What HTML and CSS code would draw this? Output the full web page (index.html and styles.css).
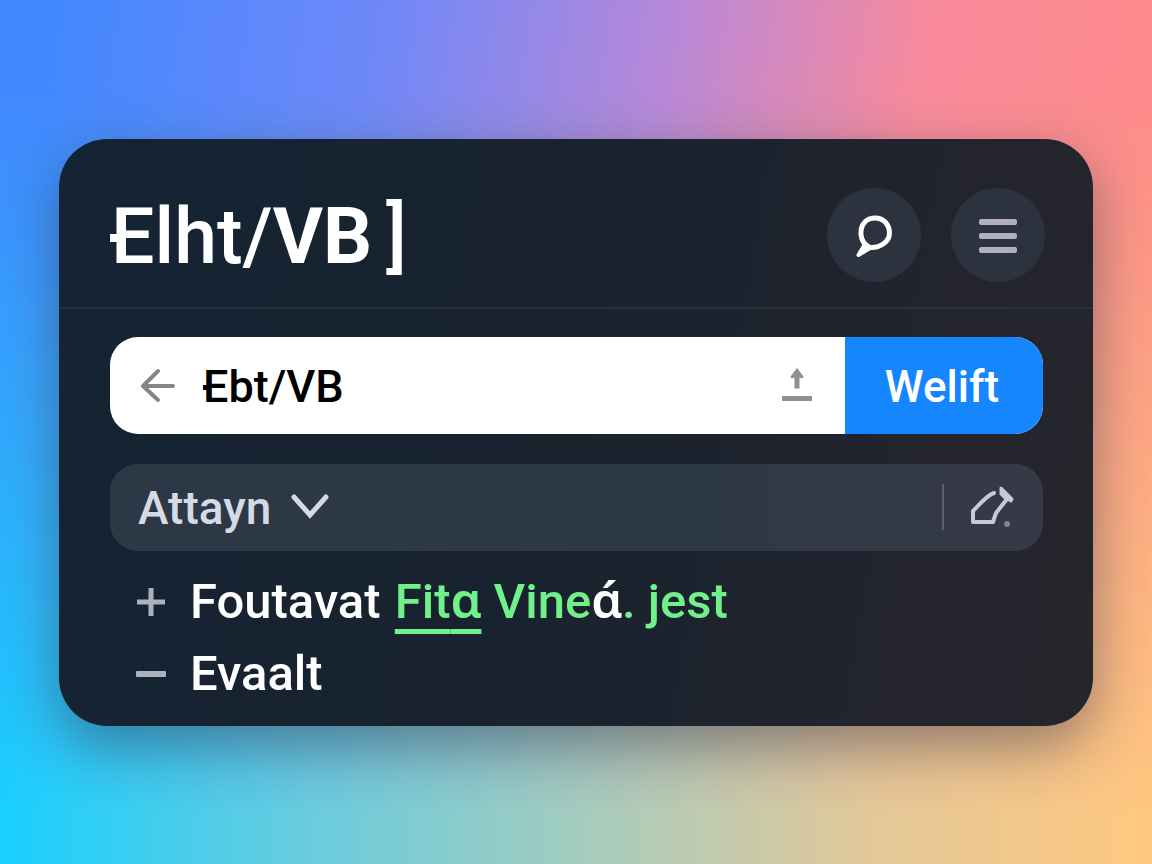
FILE: index.html
```
<!DOCTYPE html>
<html lang="en">
<head>
    <meta charset="UTF-8">
    <meta name="viewport" content="width=device-width, initial-scale=1.0">
    <title>Elht/VB</title>
    <link rel="stylesheet" href="styles.css">
</head>
<body>

<main class="card">
    <header class="card-header">
        <h1 class="title"><span class="barred">E</span>lht/<b>VB</b><span class="bracket">]</span></h1>
        <div class="actions">
            <button type="button" class="round-btn" aria-label="Search">
                <svg width="94" height="94" viewBox="0 0 94 94" fill="none">
                    <path d="M38 56 L31.5 67 L43 60" fill="#fff" stroke="#fff" stroke-width="4" stroke-linejoin="round"/>
                    <path d="M40 57.500 C30 51 32 30 48 30 C57 30 62.500 37 62.500 45 C62.500 54 53 60 43 59.5 Z" fill="#2c333f" stroke="#fff" stroke-width="5" stroke-linejoin="round"/>
                </svg>
            </button>
            <button type="button" class="round-btn" aria-label="Menu">
                <svg width="94" height="94" viewBox="0 0 94 94" fill="#b0afbb">
                    <rect x="28" y="31" width="38" height="6" rx="2"/>
                    <rect x="28" y="45" width="38" height="6" rx="2"/>
                    <rect x="28" y="59" width="38" height="6" rx="2"/>
                </svg>
            </button>
        </div>
    </header>

    <div class="container">
        <form class="search">
            <button type="button" class="icon-btn" aria-label="Back">
                <svg width="36" height="36" viewBox="0 0 36 36" fill="none" stroke="#858585" stroke-width="4" stroke-linecap="round" stroke-linejoin="round">
                    <path d="M19 4 L4 19 L19 33 M5 19 H34"/>
                </svg>
            </button>
            <div class="search-field">
                <input type="text" class="search-input" aria-label="Query" value="Ebt/VB">
            </div>
            <button type="button" class="icon-btn upload-btn" aria-label="Upload">
                <svg width="30" height="36" viewBox="0 0 30 36" fill="#8f8f91">
                    <path d="M15 1 L21.5 9.5 L20.5 11.5 L17.5 10.5 V21.5 H12.5 V10.5 L9.5 11.5 L8.5 9.5 Z"/>
                    <rect x="0" y="29" width="30" height="5" rx="1"/>
                </svg>
            </button>
            <button type="submit" class="submit-btn">Welift</button>
        </form>

        <div class="toolbar">
            <div class="picker">
                <select class="picker-select" aria-label="Mode">
                    <option>Attayn</option>
                </select>
                <svg width="40" height="28" viewBox="0 0 40 28" fill="none" stroke="#d5dae4" stroke-width="5" stroke-linecap="round">
                    <path d="M4 4 L20 22 L36 4"/>
                </svg>
            </div>
            <button type="button" class="icon-btn edit-btn" aria-label="Edit">
                <svg width="46" height="46" viewBox="0 0 46 46" fill="none" stroke="#c6cad4" stroke-width="4" stroke-linejoin="round" stroke-linecap="round">
                    <path d="M25 9 C18 11 11 20 4 27 V38 H24 L27 29 L38 15"/>
                    <path d="M32 4 L43 15 L42 17 L36 14 L32 10 Z" stroke-width="3" fill="#c6cad4"/>
                    <circle cx="38" cy="40" r="3" fill="#808590" stroke="none"/>
                </svg>
            </button>
        </div>

        <ul class="list">
            <li class="list-item">
                <svg class="mark" width="30" height="30" viewBox="0 0 30 30" fill="#acb1be">
                    <path d="M12.5 1 H17.5 V12.5 H29 V17.5 H17.5 V29 H12.5 V17.5 H1 V12.5 H12.5 Z"/>
                </svg>
                <span class="words">Foutavat <span class="added"><a href="#" class="link">Fit<span class="alpha">&#593;</span></a> Vine<span class="alpha plain">&#593;&#769;</span>. jest</span></span>
            </li>
            <li class="list-item">
                <svg class="mark" width="30" height="30" viewBox="0 0 30 30" fill="#acb1be">
                    <rect x="0" y="12" width="30" height="6" rx="1"/>
                </svg>
                <span>Evaalt</span>
            </li>
        </ul>
    </div>
</main>

</body>
</html>
```
FILE: styles.css
```
* {
    box-sizing: border-box;
}

body {
    font-family: Roboto, "Liberation Sans", sans-serif;
    font-weight: 500;
    color: #fff;
    margin: 0;
    min-height: 100vh;
    padding: 48px 59px;
    display: flex;
    align-items: center;
    position: relative;
    background: linear-gradient(100deg, #4488ff 5%, #7088f8 30%, #b888d8 52%, #f98a9b 72%, #ff8a86 95%);
}

/* warm/cyan bottom edge fading up into the top colours */
body::before {
    content: "";
    position: absolute;
    inset: 0;
    background: linear-gradient(to right, #18d0ff 0%, #64cce0 25%, #a8ccbc 52%, #e4c898 76%, #ffc880 100%);
    mask-image: linear-gradient(to bottom, transparent 10%, #000 95%);
}

button {
    font-family: inherit;
    font-weight: inherit;
    border: none;
    padding: 0;
    background: none;
    cursor: pointer;
}

svg {
    display: block;
}

.card {
    position: relative;
    width: 100%;
    border-radius: 48px;
    background: linear-gradient(100deg, #152334 0%, #19232e 50%, #24242e 85%, #25262b 100%);
    box-shadow: 0 20px 56px rgba(30, 40, 60, 0.45);
}

.card-header {
    display: flex;
    align-items: center;
    justify-content: space-between;
    padding: 49px 48px 25px 52px;
    border-bottom: 2px solid #2a303a;
}

.title {
    margin: 0;
    padding-top: 4px;
    font-size: 77px;
    line-height: 90px;
    font-weight: 500;
}

.barred {
    position: relative;
}

.barred::before {
    content: "";
    position: absolute;
    left: -1px;
    top: 47%;
    width: 12px;
    height: 8px;
    background: #fff;
}

.bracket {
    margin-left: 14px;
}

.actions {
    display: flex;
    gap: 30px;
}

.round-btn {
    width: 94px;
    height: 94px;
    border-radius: 50%;
    background: #2c333f;
}

.container {
    padding: 28px 50px 16px 51px;
}

.search {
    display: flex;
    align-items: center;
    height: 97px;
    border-radius: 28px;
    background: #fff;
    overflow: hidden;
    padding-left: 29px;
}

.search-field {
    position: relative;
    flex: 1;
    margin-left: 28px;
    padding-top: 4px;
}

.search-field::before {
    content: "";
    position: absolute;
    left: 0;
    top: 50%;
    width: 6px;
    height: 5px;
    background: #000;
}

.search-input {
    width: 100%;
    border: none;
    outline: none;
    padding: 0;
    background: transparent;
    color: #000;
    font: inherit;
    font-size: 45px;
    line-height: 56px;
}

.upload-btn {
    margin-right: 33px;
}

.submit-btn {
    align-self: stretch;
    width: 198px;
    padding: 4px 4px 0 0;
    background: #1686ff;
    color: #fff;
    font-size: 44px;
}

.toolbar {
    display: flex;
    align-items: center;
    justify-content: space-between;
    height: 87px;
    margin-top: 30px;
    padding: 0 28px;
    border-radius: 28px;
    background: linear-gradient(to right, #2c3845, #2d3946 60%, #373a46);
}

.picker {
    display: flex;
    align-items: center;
    gap: 18px;
}

.picker-select {
    appearance: none;
    border: none;
    padding: 2px 0 0;
    background: transparent;
    color: #d5dae4;
    font: inherit;
    font-size: 46px;
    line-height: 56px;
}

.edit-btn {
    padding-left: 25px;
    border-left: 2px solid #5c616c;
}

.list {
    list-style: none;
    margin: 15px 0 0;
    padding: 0 26px;
}

.list-item {
    display: flex;
    align-items: center;
    gap: 24px;
    font-size: 49px;
    line-height: 72px;
}

.words {
    white-space: pre;
}

.added {
    margin-left: 2px;
    color: #72f18a;
}

.link {
    color: inherit;
    text-decoration: underline;
    text-decoration-thickness: 5px;
    text-underline-offset: 11px;
}

.alpha {
    font-family: "Noto Sans", "Open Sans", sans-serif;
    font-weight: 600;
    line-height: 1;
}

.plain {
    color: #fff;
}
```
